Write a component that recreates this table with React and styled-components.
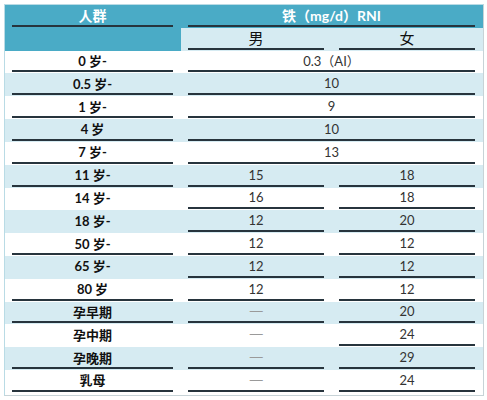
import React from 'react'
import styled, { createGlobalStyle } from 'styled-components';

const Global = createGlobalStyle`
  body {
    margin: 0;
    background: #fff;
    font-family: Lato, "Noto Sans CJK SC", sans-serif;
  }
`;

const Frame = styled.div`
  width: 478px;
  margin: 4px 0 0 4px;
  border: 1px solid #b9dbe5;
  border-right-color: #c7d3d7;
  border-bottom-color: #c7d3d7;
  padding-bottom: 2px;
`;

const Grid = styled.div`
  display: grid;
  grid-template-columns: 176px 151px 151px;
  grid-template-rows: repeat(17, 22.82px);
`;

const Cell = styled.div`
  display: flex;
  padding: 0 8px 1px 7px;
  background: ${p => p.$bg};
  grid-column: ${p => p.$span ? 'span 2' : 'auto'};
`;

const Inner = styled.div`
  flex: 1;
  display: flex;
  align-items: center;
  justify-content: center;
  border-bottom: 2px solid ${p => p.$rule ? '#27343d' : 'transparent'};
  font-size: ${p => p.$size || 13}px;
  font-weight: ${p => p.$bold ? 700 : 400};
  color: ${p => p.$color || '#333'};
  white-space: nowrap;
`;

const Dash = styled.span`
  display: inline-block;
  color: #9a9a9a;
  font-size: 13px;
  transform: scaleX(1.5);
`;

const BLUE = '#4aabc6';
const LIGHT = '#d6ebf2';
const WHITE = '#ffffff';

// [label, male, female (null = merged), ruled flags [c1, c2, c3]]
const rows = [
  ['0 岁-', '0.3（AI）', null, [1, 1]],
  ['0.5 岁-', '10', null, [1, 1]],
  ['1 岁-', '9', null, [1, 1]],
  ['4 岁', '10', null, [1, 1]],
  ['7 岁-', '13', null, [1, 1]],
  ['11 岁-', '15', '18', [1, 1, 1]],
  ['14 岁-', '16', '18', [0, 1, 1]],
  ['18 岁-', '12', '20', [0, 1, 1]],
  ['50 岁-', '12', '12', [1, 1, 1]],
  ['65 岁-', '12', '12', [0, 1, 1]],
  ['80 岁', '12', '12', [1, 1, 1]],
  ['孕早期', '—', '20', [1, 1, 1]],
  ['孕中期', '—', '24', [0, 0, 1]],
  ['孕晚期', '—', '29', [1, 1, 1]],
  ['乳母', '—', '24', [1, 1, 1]],
];

const App = () => (
  <>
    <Global />
    <Frame>
      <Grid>
        <Cell $bg={BLUE}>
          <Inner $rule $bold $color="#fff" $size={14}>人群</Inner>
        </Cell>
        <Cell $bg={BLUE} $span>
          <Inner $rule $bold $color="#fff" $size={14}>铁（mg/d）RNI</Inner>
        </Cell>
        <Cell $bg={BLUE}><Inner /></Cell>
        <Cell $bg={LIGHT}>
          <Inner $rule $color="#111" $size={15}>男</Inner>
        </Cell>
        <Cell $bg={LIGHT}>
          <Inner $rule $color="#111" $size={15}>女</Inner>
        </Cell>
        {rows.map(([label, m, f, rule], i) => {
          const bg = i % 2 ? LIGHT : WHITE;
          return (
            <React.Fragment key={label}>
              <Cell $bg={bg}>
                <Inner $rule={rule[0]} $bold $color="#111">{label}</Inner>
              </Cell>
              <Cell $bg={bg} $span={f === null}>
                <Inner $rule={rule[1]}>
                  {m === '—' ? <Dash>—</Dash> : m}
                </Inner>
              </Cell>
              {f !== null && (
                <Cell $bg={bg}>
                  <Inner $rule={rule[2]}>{f}</Inner>
                </Cell>
              )}
            </React.Fragment>
          );
        })}
      </Grid>
    </Frame>
  </>
)

export default App
